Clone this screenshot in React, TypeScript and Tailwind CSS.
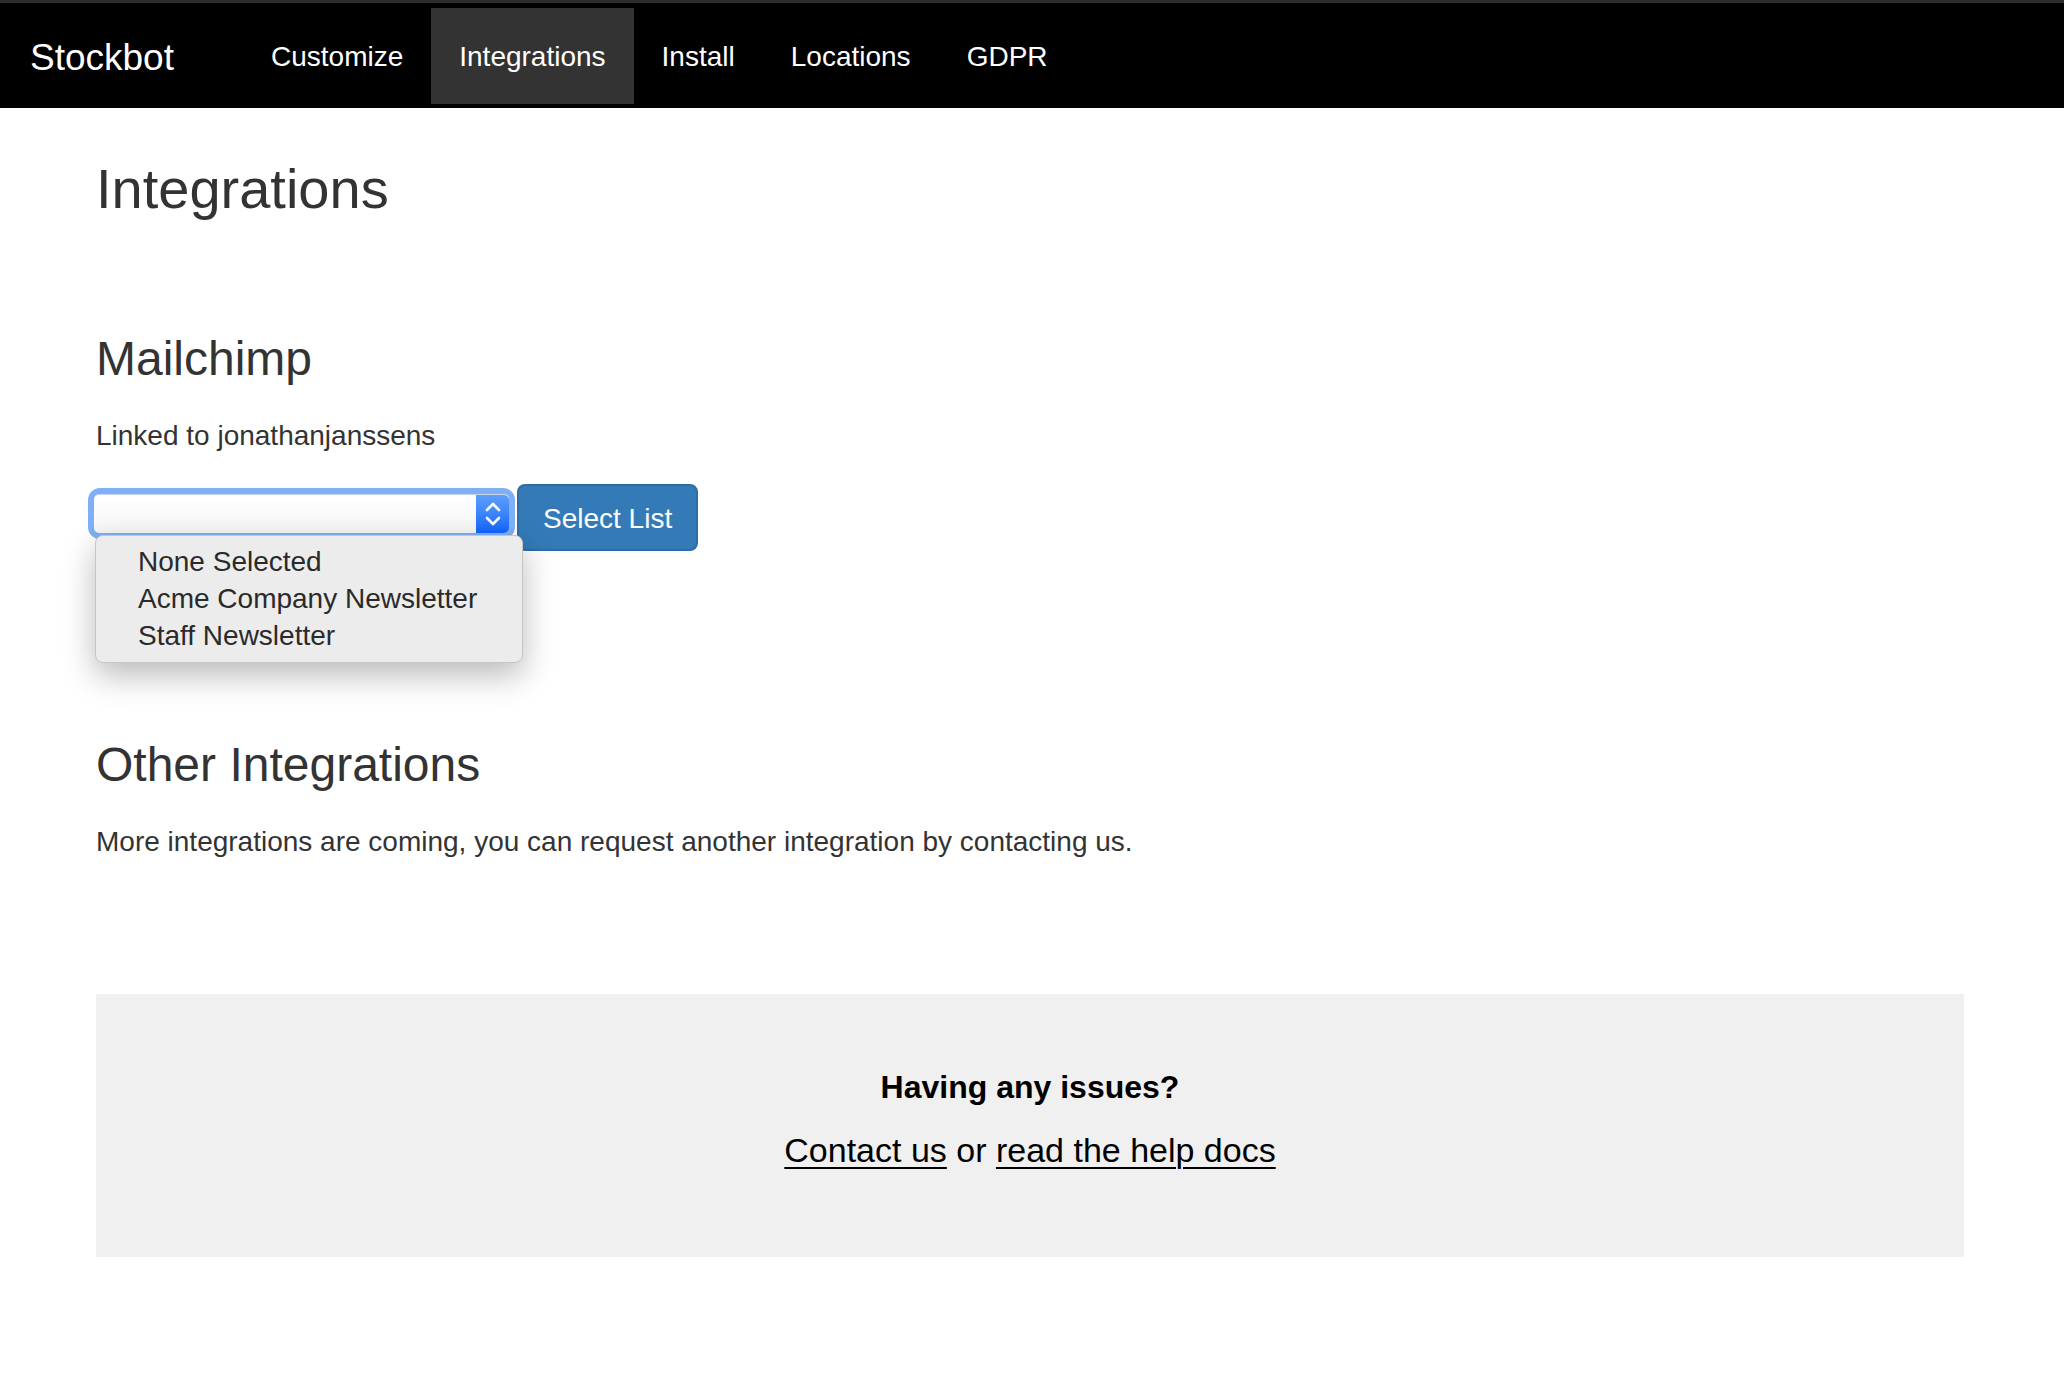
import React from 'react';

const navItems = ['Customize', 'Integrations', 'Install', 'Locations', 'GDPR'];
const listOptions = ['None Selected', 'Acme Company Newsletter', 'Staff Newsletter'];

const NavBar: React.FC<{ active: string }> = ({ active }) => (
  <nav className="h-[108px] bg-black border-t-[3px] border-[#2c2c2c] flex items-center">
    <div className="pl-[30px] w-[243px] pt-[3px] text-[37px] leading-none text-white">Stockbot</div>
    <ul className="flex items-center">
      {navItems.map((item) => (
        <li
          key={item}
          className={`h-[96px] px-[28px] text-[28px] leading-[98px] text-white ${item === active ? 'bg-[#333333]' : ''}`}
        >
          {item}
        </li>
      ))}
    </ul>
  </nav>
);

const Stepper: React.FC = () => (
  <div className="w-[33px] self-stretch rounded-r-[5px] bg-gradient-to-b from-[#5e9ef9] to-[#0f66ff] flex items-center justify-center">
    <svg width="18" height="30" viewBox="0 0 18 30" fill="none" stroke="white" strokeWidth="2.6" strokeLinecap="round" strokeLinejoin="round">
      <path d="M3 11 L9 5 L15 11" />
      <path d="M3 19 L9 25 L15 19" />
    </svg>
  </div>
);

const ListSelect: React.FC = () => (
  <div className="relative mt-[4px] -ml-[8px]">
    <div className="w-[427px] h-[51px] rounded-[12px] bg-[#7fb0f6] p-[6px]">
      <div className="h-full rounded-[5px] bg-gradient-to-b from-white to-[#f6f6f6] border-t border-[#c9d6ea] flex justify-end">
        <Stepper />
      </div>
    </div>
    <ul className="absolute left-[7px] top-[47px] w-[428px] rounded-[8px] bg-[#ececec] border border-[#c6c6c6] pt-[7px] pb-[8px] shadow-[0_12px_32px_rgba(0,0,0,0.28)]">
      {listOptions.map((opt) => (
        <li key={opt} className="pl-[42px] text-[28px] leading-[37px] text-[#2a2a2a]">
          {opt}
        </li>
      ))}
    </ul>
  </div>
);

export default function App() {
  return (
    <div className="min-h-[1398px] bg-white" style={{ fontFamily: '"Liberation Sans", Arial, sans-serif' }}>
      <NavBar active="Integrations" />

      <main className="ml-[96px] mr-[100px] text-[#333333]">
        <h1 className="mt-[50px] text-[56px] leading-[1.1] font-normal">Integrations</h1>

        <section>
          <h2 className="mt-[113px] text-[48px] leading-[1.1] font-normal">Mailchimp</h2>
          <p className="mt-[31px] text-[28px] leading-[1.4]">Linked to jonathanjanssens</p>
          <div className="mt-[28px] flex items-start gap-[2px]">
            <ListSelect />
            <button
              type="button"
              className="h-[67px] px-[24px] pt-[3px] rounded-[8px] bg-[#337ab7] border-2 border-[#2e6da4] text-[28px] text-white"
            >
              Select List
            </button>
          </div>
        </section>

        <section>
          <h2 className="mt-[188px] text-[48px] leading-[1.1] font-normal">Other Integrations</h2>
          <p className="mt-[31px] text-[28px] leading-[1.4]">
            More integrations are coming, you can request another integration by contacting us.
          </p>
        </section>

        <div className="mt-[132px] h-[263px] bg-[#f0f0f0] pt-[74px] text-center text-black">
          <h3 className="text-[32px] leading-[1.2] font-bold">Having any issues?</h3>
          <p className="mt-[24px] text-[34px] leading-[1.2]">
            <a href="#" className="underline decoration-2 underline-offset-[5px]">Contact us</a>
            {' or '}
            <a href="#" className="underline decoration-2 underline-offset-[5px]">read the help docs</a>
          </p>
        </div>
      </main>
    </div>
  );
}
